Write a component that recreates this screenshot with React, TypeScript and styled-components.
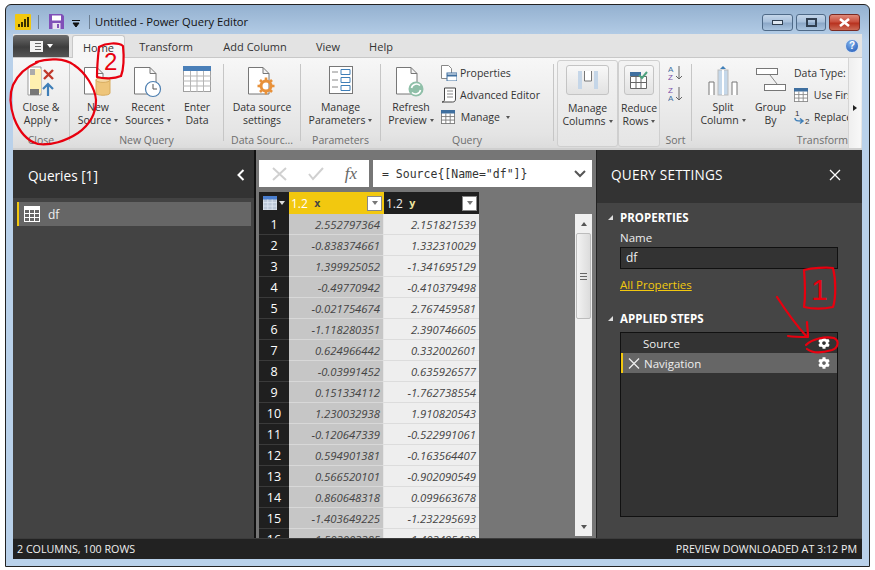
import React from "react";
import styled, { createGlobalStyle } from "styled-components";
import { FaCog } from "react-icons/fa";

const Global = createGlobalStyle`
  html, body { margin: 0; padding: 0; background: #fff; }
  body { font-family: "Open Sans", "Noto Sans", sans-serif; width: 875px; height: 570px; overflow: hidden; }
  * { box-sizing: border-box; }
`;

const Page = styled.div`position: relative; width: 875px; height: 570px; padding: 4px 0 0 5px;`;
const Win = styled.div`
  width: 865px; height: 563px; border: 1px solid #222; border-radius: 6px 6px 0 0;
  padding: 0 7px 7px; display: flex; flex-direction: column;
  background: linear-gradient(#94b1d0 0, #b9d1ea 36px);
`;
const TitleBar = styled.div`height: 29px; display: flex; align-items: center; padding: 4px 0 0 2px; flex: none;`;
const VSep = styled.span<{ $ml: number }>`width: 1px; height: 14px; background: #6c7f93; margin-left: ${p => p.$ml}px; flex: none;`;
const TitleText = styled.span`margin-left: 5px; font-size: 11.2px; color: #111; white-space: nowrap;`;
const WinBtns = styled.div`margin-left: auto; margin-right: 2px; display: flex; gap: 3px; align-self: flex-start; margin-top: 5px;`;
const WinBtn = styled.div<{ $w: number; $close?: boolean }>`
  width: ${p => p.$w}px; height: 17px; border: 1px solid ${p => p.$close ? "#7a2a22" : "#4f6a88"}; border-radius: 3px;
  display: flex; align-items: center; justify-content: center;
  background: ${p => p.$close ? "linear-gradient(#e08a7a,#c9503e 45%,#b8321f 55%,#cc6a55)" : "linear-gradient(#c4d6ea,#a9c1dc 45%,#8ca8c8 55%,#a9c4e0)"};
`;
const TabBar = styled.div`height: 24px; flex: none; display: flex; align-items: flex-end; background: #e3e3e3; position: relative; border-bottom: 1px solid #c8c8c8;`;
const FileBtn = styled.div`
  width: 56px; height: 22px; margin-bottom: 0; border-radius: 3px 3px 0 0; display: flex; align-items: center; justify-content: center; gap: 4px;
  background: linear-gradient(#6d6d6d, #3d3d3d 55%, #555);
`;
const Tab = styled.div<{ $active?: boolean; $w: number; $ml: number }>`
  width: ${p => p.$w}px; margin-left: ${p => p.$ml}px; height: ${p => p.$active ? 23 : 22}px; font-size: 11px; color: #333;
  display: flex; align-items: center; justify-content: center; white-space: nowrap;
  ${p => p.$active ? "background:#f6f6f6;border:1px solid #c8c8c8;border-bottom:none;border-radius:3px 3px 0 0;margin-bottom:-1px;" : ""}
`;
const Help = styled.div`
  margin-left: auto; margin-right: 3px; margin-bottom: 4px; width: 14px; height: 14px; border-radius: 50%;
  background: radial-gradient(circle at 40% 30%, #7fb0ea, #1d55b5); border: 1px solid #d5e2f3;
  color: #fff; font: bold 10px/12px "Liberation Sans", sans-serif; text-align: center;
`;
const Ribbon = styled.div`height: 92px; flex: none; display: flex; background: linear-gradient(#f7f7f7, #e4e4e4 85%, #dcdcdc); border-bottom: 2px solid #cfcfcf; overflow: hidden;`;
const Group = styled.div<{ $w: number; $boxed?: boolean }>`
  width: ${p => p.$w}px; flex: none; display: flex; flex-direction: column; position: relative;
  ${p => p.$boxed ? "border:1px solid #cfcfcf;border-radius:3px;margin-top:2px;height:87px;background:linear-gradient(#f3f3f3,#e5e5e5);" : ""}
`;
const GroupBody = styled.div`height: 74px; display: flex; flex: none;`;
const GroupLabel = styled.div`font-size: 10.5px; color: #6e6e6e; text-align: center; line-height: 17px; white-space: nowrap;`;
const RibbonSep = styled.div<{ $ml?: number }>`width: 1px; flex: none; margin: 6px 0 7px ${p => p.$ml ?? 0}px; background: #c6c6c6;`;
const BigBtn = styled.div<{ $w: number; $ml?: number; $pt?: number }>`
  width: ${p => p.$w}px; flex: none; margin-left: ${p => p.$ml ?? 0}px; display: flex; flex-direction: column; align-items: center; padding-top: ${p => p.$pt ?? 8}px;
`;
const IconSlot = styled.div`height: 35px; flex: none; display: flex; justify-content: center; align-items: flex-start;`;
const BigLabel = styled.div`font-size: 10.5px; line-height: 13px; color: #333; text-align: center; white-space: nowrap;`;
const Caret = styled.span`display: inline-block; width: 0; height: 0; border: 2.5px solid transparent; border-top: 3px solid #555; border-bottom: none; margin-left: 3px; vertical-align: 2px;`;
const SmallCol = styled.div<{ $ml: number; $w: number }>`margin-left: ${p => p.$ml}px; width: ${p => p.$w}px; overflow: hidden; padding-top: 4px; display: flex; flex-direction: column; flex: none;`;
const SmallRow = styled.div`height: 22px; display: flex; align-items: center; gap: 3px; font-size: 10.5px; color: #333; white-space: nowrap;`;
const RaisedIcon = styled.div`
  width: 43px; height: 30px; margin-top: -2px; border: 1px solid #c4c4c4; border-radius: 3px; display: flex; align-items: center; justify-content: center;
  background: linear-gradient(#f8f8f8,#e2e2e2);
`;
const RaisedNarrow = styled(RaisedIcon)`width: 30px;`;
const SortCol = styled.div`margin-left: 8px; display: flex; flex-direction: column; gap: 5px; padding-top: 7px;`;
const ScrollRight = styled.div`
  flex: none; width: 13px; background: linear-gradient(90deg,#efefef,#f8f8f8); border-left: 1px solid #d5d5d5;
  display: flex; align-items: center; justify-content: center; padding-top: 10px;
`;
const TriR = styled.span`width: 0; height: 0; border: 3px solid transparent; border-left: 4px solid #222; border-right: none;`;

const Main = styled.div`height: 388px; flex: none; display: flex; overflow: hidden;`;
const LeftPane = styled.div`width: 243px; flex: none; background: #434343; border-right: 2px solid #111; display: flex; flex-direction: column;`;
const LeftHead = styled.div`height: 48px; flex: none; background: #333; display: flex; align-items: center; justify-content: space-between; padding: 2px 9px 0 15px; color: #fff; font-size: 13.6px; font-weight: 500;`;
const QueryItem = styled.div`margin: 4px 3px 0 4px; height: 24px; background: #666; border-left: 2px solid #f2c80f; display: flex; align-items: center; gap: 8px; padding-left: 5px; color: #eee; font-size: 12px;`;
const Center = styled.div`width: 340px; flex: none; background: #767676; padding: 10px 4px 0 3px; display: flex; flex-direction: column; overflow: hidden;`;
const FormulaRow = styled.div`height: 27px; flex: none; display: flex; gap: 4px;`;
const FxBox = styled.div`width: 110px; background: #fff; display: flex; align-items: center; justify-content: space-between; padding: 0 12px 0 13px;`;
const Fx = styled.span`font: italic 17px "Liberation Serif", serif; color: #666;`;
const FormulaBox = styled.div`flex: 1; background: #fff; display: flex; align-items: center; justify-content: space-between; padding: 0 6px 0 9px; font: 11.5px "DejaVu Sans Mono", monospace; color: #333; white-space: nowrap;`;
const GridArea = styled.div`flex: 1; min-height: 0; margin-top: 5px; display: flex; justify-content: space-between; overflow: hidden;`;
const Table = styled.div`width: 220px; flex: none; display: flex; flex-direction: column;`;
const HeadRow = styled.div`height: 22px; flex: none; display: grid; grid-template-columns: 30px 95px 95px; background: #1f1f1f;`;
const Corner = styled.div`display: flex; align-items: center; justify-content: center; gap: 2px;`;
const HeadCell = styled.div<{ $sel?: boolean }>`
  display: flex; align-items: center; padding: 0 2px 0 2px; font-size: 12px; gap: 6px;
  color: ${p => p.$sel ? "#fff" : "#eee"}; background: ${p => p.$sel ? "#f2c80f" : "#1f1f1f"};
`;
const ColName = styled.span<{ $sel?: boolean }>`font: bold 11px "DejaVu Sans Mono", monospace; color: ${p => p.$sel ? "#444" : "#f0e6a0"};`;
const Filter = styled.div`margin-left: auto; width: 15px; height: 15px; background: #fff; border: 1px solid #888; display: flex; align-items: center; justify-content: center;`;
const TriD = styled.span`width: 0; height: 0; border: 3.5px solid transparent; border-top: 4px solid #777; border-bottom: none;`;
const Row = styled.div`height: 21px; flex: none; display: grid; grid-template-columns: 30px 95px 95px;`;
const RowNum = styled.div`background: #1f1f1f; color: #fff; font-size: 12.5px; display: flex; align-items: center; justify-content: center; border-bottom: 1px solid #3a3a3a;`;
const Val = styled.div<{ $sel?: boolean }>`
  background: ${p => p.$sel ? "#c6c6c6" : "#eeeeee"}; color: #444; font-size: 11.3px; font-style: italic;
  display: flex; align-items: center; justify-content: flex-end; padding-right: 3px;
  border-bottom: 1px solid ${p => p.$sel ? "#d8d8d8" : "#dcdcdc"}; ${p => p.$sel ? "border-right:1px solid #e5e5e5;" : ""}
`;
const VScroll = styled.div`width: 17px; flex: none; margin-top: 22px; height: 322px; background: #f0f0f0; display: flex; flex-direction: column; align-items: center;`;
const ThumbBtn = styled.div`height: 19px; flex: none; display: flex; align-items: center; justify-content: center;`;
const Thumb = styled.div`width: 15px; height: 86px; flex: none; border: 1px solid #bcbcbc; border-radius: 2px; background: linear-gradient(90deg,#f2f2f2,#dcdcdc); display: flex; align-items: center; justify-content: center;`;
const Grip = styled.div`width: 7px; height: 7px; border-top: 1px solid #666; border-bottom: 1px solid #666; background: linear-gradient(transparent 2px,#666 2px,#666 3px,transparent 3px);`;
const Spacer = styled.div`flex: 1;`;
const RightPane = styled.div`flex: 1; background: #454545; display: flex; flex-direction: column; border-left: 1px solid #222;`;
const RightHead = styled.div`height: 53px; flex: none; background: #333; display: flex; align-items: center; justify-content: space-between; padding: 0 21px 4px 14px; color: #fff; font-size: 13.6px; font-weight: 500; letter-spacing: .2px;`;
const Section = styled.div<{ $mt: number }>`margin: ${p => p.$mt}px 0 0 11px; display: flex; align-items: center; gap: 7px; color: #fff; font-size: 11.5px; font-weight: 700;`;
const TriCorner = styled.span`width: 0; height: 0; border-left: 5px solid transparent; border-bottom: 5px solid #ddd;`;
const Field = styled.div`margin: 5px 0 0 23px; color: #eee; font-size: 11.5px; line-height: 16px;`;
const NameInput = styled.div`margin: 1px 24px 0 23px; height: 22px; background: #333; border: 1px solid #111; color: #eee; font-size: 12px; padding-left: 5px; line-height: 20px;`;
const Link = styled.div`margin: 8px 0 0 23px; color: #f2c80f; font-size: 11.5px; text-decoration: underline; line-height: 16px;`;
const Steps = styled.div`margin: 6px 24px 0 23px; height: 185px; background: #333; border: 1px solid #111;`;
const Step = styled.div<{ $sel?: boolean }>`
  height: 20px; display: flex; align-items: center; color: #eee; font-size: 11.5px; padding: 0 7px 0 ${p => p.$sel ? 5 : 22}px; gap: 4px;
  ${p => p.$sel ? "background:#666;border-left:2px solid #f2c80f;" : ""}
`;
const GearSlot = styled.span`margin-left: auto; display: flex; color: #fff;`;
const Status = styled.div`height: 21px; flex: none; background: #222; color: #f0f0f0; font-size: 10.7px; display: flex; align-items: center; justify-content: space-between; padding: 0 5px 0 4px; border-top: 1px solid #3c3c3c;`;

const Overlay = styled.svg`position: absolute; inset: 0; pointer-events: none;`;
const Digit = styled.div<{ $x: number; $y: number; $s: number }>`
  position: absolute; left: ${p => p.$x}px; top: ${p => p.$y}px; font: ${p => p.$s}px/1 "Liberation Sans", sans-serif; color: #e8000f; pointer-events: none;
`;

const Doc = ({ x = 0, w = 22, h = 28 }: { x?: number; w?: number; h?: number }) => (
  <path d={`M${x + .5} 1.5H${x + w - 6}L${x + w} 7.5V${h}H${x + .5}Z M${x + w - 6} 1.5V7.5H${x + w}`} fill="#fff" stroke="#777" />
);
const Ico = styled.svg`display: block; flex: none;`;
const TableIco = ({ s = 16, head = "#fff", line = "#fff", bg = "none" }: { s?: number; head?: string; line?: string; bg?: string }) => (
  <Ico width={s} height={s} viewBox="0 0 16 16">
    <rect x=".5" y=".5" width="15" height="15" fill={bg} stroke={line} />
    <rect x="0" y="0" width="16" height="4" fill={head} />
    <path d="M5.5 4v12M10.5 4v12M0 7.5h16M0 11.5h16" stroke={line} fill="none" />
  </Ico>
);

const rows: [string, string][] = [
  ["2.552797364", "2.151821539"], ["-0.838374661", "1.332310029"], ["1.399925052", "-1.341695129"],
  ["-0.49770942", "-0.410379498"], ["-0.021754674", "2.767459581"], ["-1.118280351", "2.390746605"],
  ["0.624966442", "0.332002601"], ["-0.03991452", "0.635926577"], ["0.151334112", "-1.762738554"],
  ["1.230032938", "1.910820543"], ["-0.120647339", "-0.522991061"], ["0.594901381", "-0.163564407"],
  ["0.566520101", "-0.902090549"], ["0.860648318", "0.099663678"], ["-1.403649225", "-1.232295693"],
  ["-1.503003385", "-1.403495429"],
];

export default function App() {
  return (
    <Page>
      <Global />
      <Win>
        <TitleBar>
          <Ico width="16" height="16" viewBox="0 0 16 16">
            <rect width="16" height="16" rx="1" fill="#f2c80f" />
            <path d="M3 13v-3h2v3zM6 13V8h2v5zM9 13V5h2v8zM12 13V3h2v10z" fill="#3a3000" />
          </Ico>
          <VSep $ml={7} />
          <Ico width="15" height="15" viewBox="0 0 15 15" style={{ marginLeft: 10 }}>
            <path d="M0 0h13l2 2v13H0z" fill="#8050b8" />
            <rect x="3" y="1.5" width="9" height="5" fill="#fff" />
            <rect x="3.5" y="9" width="8" height="6" fill="#e8e0f0" />
            <rect x="8" y="10" width="2" height="4" fill="#8050b8" />
          </Ico>
          <Ico width="8" height="8" viewBox="0 0 8 8" style={{ marginLeft: 8, marginTop: 4 }}>
            <path d="M0 .5h8M1 3l3 4 3-4z" stroke="#111" fill="#111" />
          </Ico>
          <VSep $ml={9} />
          <TitleText>Untitled - Power Query Editor</TitleText>
          <WinBtns>
            <WinBtn $w={31}>
              <Ico width="11" height="5" viewBox="0 0 11 5"><rect x=".5" y=".5" width="10" height="4" fill="#dfe8f2" stroke="#2f3e50" /></Ico>
            </WinBtn>
            <WinBtn $w={30}>
              <Ico width="11" height="9" viewBox="0 0 11 9"><rect x="1" y="1" width="9" height="7" fill="none" stroke="#2f3e50" strokeWidth="2" /></Ico>
            </WinBtn>
            <WinBtn $w={31} $close>
              <Ico width="13" height="9" viewBox="0 0 13 9"><path d="M2 1l9 7M11 1L2 8" stroke="#fff" strokeWidth="2.6" /></Ico>
            </WinBtn>
          </WinBtns>
        </TitleBar>
        <TabBar>
          <FileBtn>
            <Ico width="13" height="11" viewBox="0 0 13 11"><rect width="13" height="11" fill="#f2f2f2" /><path d="M5 2.5h6M5 5.5h6M5 8.5h6" stroke="#666" /></Ico>
            <TriD style={{ borderTopColor: "#fff" }} />
          </FileBtn>
          <Tab $active $w={53} $ml={3}>Home</Tab>
          <Tab $w={52} $ml={15}>Transform</Tab>
          <Tab $w={66} $ml={30}>Add Column</Tab>
          <Tab $w={28} $ml={26}>View</Tab>
          <Tab $w={26} $ml={26}>Help</Tab>
          <Help>?</Help>
        </TabBar>
        <Ribbon>
          <Group $w={56}>
            <GroupBody>
              <BigBtn $w={56}>
                <IconSlot>
                  <Ico width="28" height="30" viewBox="0 0 28 30">
                    <path d="M1 1h13v28H1z" fill="#fff" stroke="#999" />
                    <path d="M3 3h5v6H3z" fill="#666" opacity=".55" />
                    <path d="M8 3h6v24H8z" fill="#fff0b0" />
                    <path d="M3 9h5v14H3z" fill="#fff0b0" />
                    <path d="M3 23h9v6H3z" fill="#777" />
                    <path d="M14 16l-4 7h4z" fill="#fff0b0" />
                    <path d="M17 4l9 9M26 4l-9 9" stroke="#c0392b" strokeWidth="2.4" />
                    <path d="M21 30V18M16 23l5-5 5 5" stroke="#3f7fb8" strokeWidth="2.2" fill="none" />
                  </Ico>
                </IconSlot>
                <BigLabel>Close &amp;<br />Apply<Caret /></BigLabel>
              </BigBtn>
            </GroupBody>
            <GroupLabel>Close</GroupLabel>
          </Group>
          <RibbonSep />
          <Group $w={153}>
            <GroupBody>
              <BigBtn $w={50} $ml={3}>
                <IconSlot>
                  <Ico width="28" height="30" viewBox="0 0 28 30">
                    <Doc w={19} />
                    <path d="M12 14c0-3 14-3 14 0v13c0 3-14 3-14 0z" fill="#eec57a" stroke="#d8ac5f" />
                    <ellipse cx="19" cy="14" rx="7" ry="2.4" fill="#f4d9a4" stroke="#d8ac5f" />
                  </Ico>
                </IconSlot>
                <BigLabel>New<br />Source<Caret /></BigLabel>
              </BigBtn>
              <BigBtn $w={50}>
                <IconSlot>
                  <Ico width="28" height="32" viewBox="0 0 28 32">
                    <Doc w={22} />
                    <circle cx="19" cy="23" r="7.5" fill="#fff" stroke="#4d7fb0" strokeWidth="1.2" />
                    <path d="M19 18v5h4" stroke="#555" fill="none" />
                  </Ico>
                </IconSlot>
                <BigLabel>Recent<br />Sources<Caret /></BigLabel>
              </BigBtn>
              <BigBtn $w={48}>
                <IconSlot>
                  <Ico width="28" height="26" viewBox="0 0 28 26">
                    <rect x=".5" y=".5" width="27" height="25" fill="#fff" stroke="#a0a0a0" />
                    <rect width="28" height="5" fill="#4a7fb8" />
                    <path d="M7.5 5v21M14 5v21M20.5 5v21M0 10h28M0 15h28M0 20h28" stroke="#b5b5b5" />
                  </Ico>
                </IconSlot>
                <BigLabel>Enter<br />Data</BigLabel>
              </BigBtn>
            </GroupBody>
            <GroupLabel>New Query</GroupLabel>
          </Group>
          <RibbonSep />
          <Group $w={76}>
            <GroupBody>
              <BigBtn $w={76}>
                <IconSlot>
                  <Ico width="28" height="30" viewBox="0 0 28 30">
                    <Doc w={21} />
                    <g transform="translate(18 20)">
                      <circle r="5" fill="none" stroke="#e8913a" strokeWidth="3" />
                      <path d="M0-8.5v4M0 4.5v4M-8.5 0h4M4.5 0h4M-6-6l3 3M3 3l3 3M6-6L3-3M-3 3l-3 3" stroke="#e8913a" strokeWidth="2.6" />
                    </g>
                  </Ico>
                </IconSlot>
                <BigLabel>Data source<br />settings</BigLabel>
              </BigBtn>
            </GroupBody>
            <GroupLabel>Data Sourc...</GroupLabel>
          </Group>
          <RibbonSep />
          <Group $w={79}>
            <GroupBody>
              <BigBtn $w={79}>
                <IconSlot>
                  <Ico width="24" height="28" viewBox="0 0 24 28">
                    <rect x=".5" y=".5" width="23" height="27" fill="#fff" stroke="#777" />
                    <path d="M3 6h6M3 14h6M3 21h6" stroke="#888" />
                    <path d="M12 3.5h9v5h-9zM12 11.5h9v5h-9zM12 19.5h9v5h-9z" fill="#fff" stroke="#3f7fb8" />
                  </Ico>
                </IconSlot>
                <BigLabel>Manage<br />Parameters<Caret /></BigLabel>
              </BigBtn>
            </GroupBody>
            <GroupLabel>Parameters</GroupLabel>
          </Group>
          <RibbonSep />
          <Group $w={172}>
            <GroupBody>
              <BigBtn $w={56} $ml={2}>
                <IconSlot>
                  <Ico width="30" height="32" viewBox="0 0 30 32">
                    <Doc w={21} />
                    <circle cx="20" cy="23" r="7.5" fill="#8fbfa8" />
                    <path d="M15.5 22a5 5 0 0 1 8.5-2.5M24.5 24a5 5 0 0 1-8.5 2.5" stroke="#fff" strokeWidth="1.6" fill="none" />
                  </Ico>
                </IconSlot>
                <BigLabel>Refresh<br />Preview<Caret /></BigLabel>
              </BigBtn>
              <SmallCol $ml={2} $w={112}>
                <SmallRow>
                  <Ico width="16" height="16" viewBox="0 0 16 16">
                    <path d="M.5.5h7l3 3v10H.5z" fill="#fff" stroke="#888" />
                    <rect x="6" y="8" width="10" height="8" fill="#fff" stroke="#3f6f9f" />
                    <path d="M6 10.5h10" stroke="#3f6f9f" strokeWidth="2" />
                  </Ico>
                  Properties
                </SmallRow>
                <SmallRow>
                  <Ico width="16" height="16" viewBox="0 0 16 16">
                    <path d="M3.5 1h11v11c0 2-1 3-3 3H1c2 0 2.500-1 2.500-3z" fill="#fff" stroke="#444" />
                    <path d="M6 4h6M6 7h6M6 10h6" stroke="#888" />
                  </Ico>
                  Advanced Editor
                </SmallRow>
                <SmallRow>
                  <TableIco s={14} head="#3f6f9f" line="#777" bg="#fff" />
                  &nbsp;Manage<Caret />
                </SmallRow>
              </SmallCol>
            </GroupBody>
            <GroupLabel>Query</GroupLabel>
          </Group>
          <RibbonSep />
          <Group $w={61} $boxed style={{ marginLeft: 3 }}>
            <GroupBody>
              <BigBtn $w={59} $pt={6}>
                <IconSlot>
                  <RaisedIcon>
                    <Ico width="22" height="18" viewBox="0 0 22 18">
                      <rect x="1" width="4" height="18" fill="#c5d6e8" />
                      <rect x="17" width="4" height="18" fill="#c5d6e8" />
                      <path d="M7.500 0v10h7V0" fill="#fff" stroke="#777" />
                    </Ico>
                  </RaisedIcon>
                </IconSlot>
                <BigLabel>Manage<br />Columns<Caret /></BigLabel>
              </BigBtn>
            </GroupBody>
          </Group>
          <Group $w={42} $boxed>
            <GroupBody>
              <BigBtn $w={40} $pt={6}>
                <IconSlot>
                  <RaisedNarrow>
                    <Ico width="18" height="18" viewBox="0 0 18 18">
                      <rect y="1" width="11" height="4" fill="#3f6f9f" />
                      <path d="M.5 5.500h16v12H.5zM6 5.500v12M11 5.500v12M.5 11.500h16" fill="#fff" stroke="#666" />
                      <path d="M9 4l3 3 5-6" stroke="#4fa27f" strokeWidth="2" fill="none" />
                    </Ico>
                  </RaisedNarrow>
                </IconSlot>
                <BigLabel>Reduce<br />Rows<Caret /></BigLabel>
              </BigBtn>
            </GroupBody>
          </Group>
          <Group $w={31}>
            <GroupBody>
              <SortCol>
                <Ico width="16" height="16" viewBox="0 0 16 16">
                  <text x="0" y="7" fontSize="8" fill="#3f6f9f" fontFamily="Liberation Sans">A</text>
                  <text x="0" y="15" fontSize="8" fill="#7a4fa8" fontFamily="Liberation Sans">Z</text>
                  <path d="M11 1v13M8 11l3 3 3-3" stroke="#666" fill="none" />
                </Ico>
                <Ico width="16" height="16" viewBox="0 0 16 16">
                  <text x="0" y="7" fontSize="8" fill="#7a4fa8" fontFamily="Liberation Sans">Z</text>
                  <text x="0" y="15" fontSize="8" fill="#3f6f9f" fontFamily="Liberation Sans">A</text>
                  <path d="M11 1v13M8 11l3 3 3-3" stroke="#666" fill="none" />
                </Ico>
              </SortCol>
            </GroupBody>
            <GroupLabel>Sort</GroupLabel>
          </Group>
          <RibbonSep />
          <Group $w={156}>
            <GroupBody>
              <BigBtn $w={62}>
                <IconSlot>
                  <Ico width="30" height="30" viewBox="0 0 30 30">
                    <path d="M15 0l3 3h-6z" fill="#3f7fb8" />
                    <rect x="10" y="4" width="10" height="25" fill="#c5d8ea" stroke="#bbb" />
                    <path d="M15 4v25" stroke="#fff" strokeWidth="2" />
                    <path d="M1 29V16h5v13M24 29V16h5v13" fill="#fff" stroke="#777" />
                  </Ico>
                </IconSlot>
                <BigLabel>Split<br />Column<Caret /></BigLabel>
              </BigBtn>
              <BigBtn $w={33}>
                <IconSlot>
                  <Ico width="30" height="24" viewBox="0 0 30 24" style={{ marginTop: 2 }}>
                    <rect x=".5" y=".5" width="21" height="6" fill="#fff" stroke="#777" />
                    <rect x="8.500" y="16.500" width="21" height="6" fill="#fff" stroke="#777" />
                    <path d="M14 7l7 9" stroke="#888" />
                  </Ico>
                </IconSlot>
                <BigLabel>Group<br />By</BigLabel>
              </BigBtn>
              <SmallCol $ml={7} $w={54}>
                <SmallRow>Data Type:</SmallRow>
                <SmallRow>
                  <TableIco s={14} head="#3f6f9f" line="#888" bg="#fff" />
                  &nbsp;Use First Row
                </SmallRow>
                <SmallRow>
                  <Ico width="17" height="16" viewBox="0 0 17 16">
                    <text x="1" y="7" fontSize="8" fill="#333" fontFamily="Liberation Sans">1</text>
                    <text x="11" y="15" fontSize="8" fill="#333" fontFamily="Liberation Sans">2</text>
                    <path d="M1 9c0 3 2 3 7 3M6 9.500l3 2.500-3 2.500" stroke="#3f7fb8" strokeWidth="1.500" fill="none" />
                  </Ico>
                  Replace Values
                </SmallRow>
              </SmallCol>
            </GroupBody>
            <GroupLabel style={{ textAlign: "right", overflow: "hidden", paddingRight: 0 }}>Transform</GroupLabel>
          </Group>
          <ScrollRight><TriR /></ScrollRight>
        </Ribbon>
        <Main>
          <LeftPane>
            <LeftHead>
              Queries [1]
              <Ico width="8" height="12" viewBox="0 0 8 12"><path d="M6.500 1L1.500 6l5 5" stroke="#fff" strokeWidth="2" fill="none" /></Ico>
            </LeftHead>
            <QueryItem>
              <TableIco />
              df
            </QueryItem>
          </LeftPane>
          <Center>
            <FormulaRow>
              <FxBox>
                <Ico width="16" height="14" viewBox="0 0 16 14"><path d="M1 1l13 12M14 1L1 13" stroke="#d0d0d0" strokeWidth="2" /></Ico>
                <Ico width="16" height="14" viewBox="0 0 16 14"><path d="M1 7l4 5L15 1" stroke="#d0d0d0" strokeWidth="2" fill="none" /></Ico>
                <Fx>fx</Fx>
              </FxBox>
              <FormulaBox>
                = Source{"{"}[Name="df"]{"}"}
                <Ico width="12" height="8" viewBox="0 0 12 8"><path d="M1 1l5 5 5-5" stroke="#555" strokeWidth="2" fill="none" /></Ico>
              </FormulaBox>
            </FormulaRow>
            <GridArea>
              <Table>
                <HeadRow>
                  <Corner>
                    <TableIco s={14} head="#4a7fd0" line="#dfe7f2" bg="#bcc8d8" />
                    <TriD style={{ borderTopColor: "#ddd" }} />
                  </Corner>
                  <HeadCell $sel>1.2 <ColName $sel>x</ColName><Filter><TriD /></Filter></HeadCell>
                  <HeadCell>1.2 <ColName>y</ColName><Filter><TriD /></Filter></HeadCell>
                </HeadRow>
                {rows.map((r, i) => (
                  <Row key={i}>
                    <RowNum>{i + 1}</RowNum>
                    <Val $sel>{r[0]}</Val>
                    <Val>{r[1]}</Val>
                  </Row>
                ))}
              </Table>
              <VScroll>
                <ThumbBtn><TriD style={{ transform: "rotate(180deg)", borderTopColor: "#555" }} /></ThumbBtn>
                <Thumb><Grip /></Thumb>
                <Spacer />
                <ThumbBtn><TriD style={{ borderTopColor: "#555" }} /></ThumbBtn>
              </VScroll>
            </GridArea>
          </Center>
          <RightPane>
            <RightHead>
              QUERY SETTINGS
              <Ico width="12" height="12" viewBox="0 0 12 12"><path d="M1 1l10 10M11 1L1 11" stroke="#fff" strokeWidth="1.300" /></Ico>
            </RightHead>
            <Section $mt={7}><TriCorner />PROPERTIES</Section>
            <Field>Name</Field>
            <NameInput>df</NameInput>
            <Link>All Properties</Link>
            <Section $mt={18}><TriCorner />APPLIED STEPS</Section>
            <Steps>
              <Step>Source<GearSlot><FaCog size={12} /></GearSlot></Step>
              <Step $sel>
                <Ico width="12" height="11" viewBox="0 0 12 11"><path d="M1 .5l10 10M11 .5L1 10.500" stroke="#eee" strokeWidth="1.300" /></Ico>
                Navigation
                <GearSlot><FaCog size={12} /></GearSlot>
              </Step>
            </Steps>
          </RightPane>
        </Main>
        <Status>
          <span>2 COLUMNS, 100 ROWS</span>
          <span>PREVIEW DOWNLOADED AT 3:12 PM</span>
        </Status>
      </Win>
      <Overlay width="875" height="570" viewBox="0 0 875 570">
        <g fill="none" stroke="#e8000f" strokeWidth="2.200" strokeLinecap="round" strokeLinejoin="round">
          <path d="M36 62C48 58 65 58 74 65C86 73 95 88 96 100C96 115 88 126 78 133C66 141 50 146 38 144C27 141 19 131 14 118C10 106 9 95 13 85C18 74 26 67 38 62" />
          <path d="M99 47C106 43 118 42 123 46C124 56 124 68 121 76C114 79 104 79 97 77C97 67 98 56 99 47Z" />
          <path d="M804 270C812 268 826 267 833 268C836 280 836 298 833 307C824 309 812 309 804 307C806 294 805 282 804 270Z" />
          <path d="M777 297C786 311 797 326 807 337M788 336C794 337 801 337 808 337C808 331 807 326 807 322" />
          <path d="M806 345C812 339 825 336 834 338C840 341 838 348 832 350C822 353 812 353 807 349" />
        </g>
      </Overlay>
      <Digit $x={104} $y={50} $s={24}>2</Digit>
      <Digit $x={811} $y={275} $s={30}>1</Digit>
    </Page>
  );
}
